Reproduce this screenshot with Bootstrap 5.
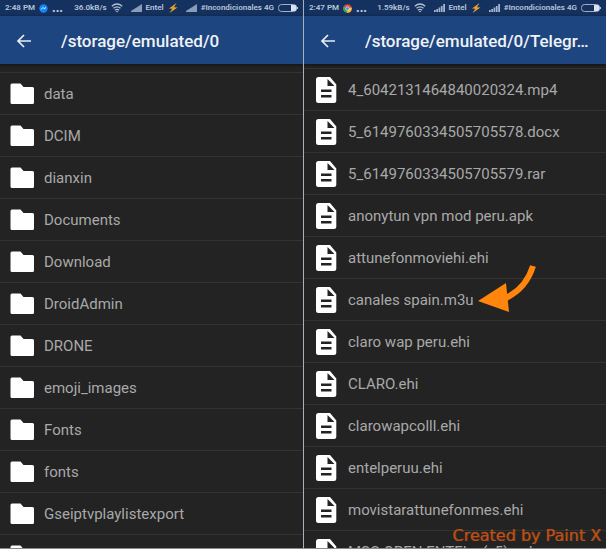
<!DOCTYPE html>
<html lang="es">
<head>
<meta charset="utf-8">
<meta name="viewport" content="width=device-width, initial-scale=1">
<title>File browser</title>
<link href="https://cdn.jsdelivr.net/npm/bootstrap@5.3.0/dist/css/bootstrap.min.css" rel="stylesheet">
<style>
body { font-family: Roboto, "Liberation Sans", sans-serif; background: #232323; }
.phone { min-width: 0; background: #232323; border-bottom: 1px solid #8a8a8a; }
.phone-right { border-left: 1px solid #a9b0b8; }
.status { height: 16px; background: #15315f; color: #b9c6d8; font-size: 8px; line-height: 16px; font-weight: 600; padding: 0 5px; white-space: nowrap; }
.status svg { flex: none; }
.dots { font-size: 12px; line-height: 12px; }
.appbar { height: 48px; background: #1d4580; padding: 2px 16px 0; gap: 29px; box-shadow: 0 1px 3px #111; }
.back { background: none; border: 0; line-height: 0; }
.path-title { color: #f0f2f5; font-size: 17px; line-height: 24px; font-weight: 500; }
.files { padding-top: 8px; }
.files-right { padding-top: 4px; }
.entry { height: 42px; border-top: 1px solid #333; padding: 0 10px; gap: 10px; color: #a9a9a9; font-size: 15px; line-height: 20px; text-decoration: none; white-space: nowrap; }
.entry svg { width: 24px; height: 28px; flex: none; }
.pointer { left: 174px; top: 265px; }
.credit { right: 5px; bottom: 2px; font-family: "DejaVu Sans", sans-serif; font-size: 16px; line-height: 20px; color: #c8481a; text-shadow: 1px 0 #80700088; }
</style>
<script src="https://cdn.jsdelivr.net/npm/bootstrap@5.3.0/dist/js/bootstrap.bundle.min.js"></script>
</head>
<body>
<svg class="d-none" aria-hidden="true">
<symbol id="folder" viewBox="0 0 24 28"><path fill="#fff" d="M2 3.500h8.500l3 3.500H22.500a1.500 1.500 0 0 1 1.500 1.500V22.500a1.500 1.500 0 0 1-1.500 1.500H2A1.500 1.500 0 0 1 .5 22.500V5A1.500 1.500 0 0 1 2 3.500z"/></symbol>
<symbol id="file" viewBox="0 0 24 28"><path fill="#fff" fill-rule="evenodd" d="M4.500 1H16L22.300 8.500V24.500a2.500 2.500 0 0 1-2.500 2.500H4.500A2.500 2.500 0 0 1 2 24.500V3.500A2.500 2.500 0 0 1 4.500 1zM13.500 3V10H20.500zM7 13.500V16H17.500V13.500zM7 19V21.500H17.500V19z"/></symbol>
<symbol id="wifi" viewBox="0 0 12 10"><g fill="none" stroke="#b4c1d4" stroke-width="1.300"><path d="M.8 3.300Q6-1.200 11.200 3.300M2.500 5.300Q6 2.300 9.500 5.300M4 7.200Q6 5.500 8 7.200"/></g><path fill="#b4c1d4" d="M4.800 8L6 9.500 7.200 8z"/></symbol>
<symbol id="signal" viewBox="0 0 11 8"><path fill="#899dba" d="M0 8V7L11 0V8z"/></symbol>
<symbol id="bars" viewBox="0 0 11 8"><path fill="#a5b5cb" d="M0 6h1.700v2H0zM2.300 5H4v3H2.300zM4.600 3.500h1.700V8H4.600zM6.900 2h1.700v6H6.900zM9.200 0H11v8H9.200z"/></symbol>
<symbol id="bolt" viewBox="0 0 10 10"><path fill="#e7a22b" d="M8.500 0L1 5.500 4.300 5.800 1.500 10 9.500 4.500 6 4.200z"/></symbol>
<symbol id="battery" viewBox="0 0 20 8"><rect x=".5" y=".5" width="18" height="7" rx="3" fill="none" stroke="#9fb0c8"/><path fill="#dbe3ed" d="M13 1h3.500a2 2 0 0 1 2 2v2a2 2 0 0 1-2 2H13z"/><path fill="#b4c1d4" d="M19 3h1v2h-1z"/></symbol>
<symbol id="arrow-back" viewBox="0 0 16 16"><path d="M8 2L2 8l6 6M2.500 8H15" fill="none" stroke="#e8edf4" stroke-width="1.700"/></symbol>
</svg>
<div class="d-flex vh-100 overflow-hidden">
<section class="phone phone-left d-flex flex-column w-50 overflow-hidden">
<div class="status d-flex align-items-center justify-content-between">
<div class="d-flex align-items-center gap-1"><span>2:48 PM</span><svg width="9" height="9" viewBox="0 0 9 9"><circle cx="4.500" cy="4.500" r="4.200" fill="#1685f5"/><path d="M2 5.500L4 3.500 5 4.700 7 3.500" fill="none" stroke="#d9efff"/></svg><b class="dots">...</b></div>
<div class="d-flex align-items-center gap-1"><span>36.0kB/s</span><svg width="12" height="10"><use href="#wifi"/></svg><svg class="ms-1" width="11" height="8"><use href="#signal"/></svg><span>Entel</span><svg width="10" height="10"><use href="#bolt"/></svg><svg class="ms-1" width="11" height="8"><use href="#signal"/></svg><span>#Incondicionales 4G</span><svg width="20" height="8"><use href="#battery"/></svg></div>
</div>
<header class="appbar d-flex align-items-center flex-shrink-0"><button class="back p-0" type="button" aria-label="Back"><svg width="16" height="16"><use href="#arrow-back"/></svg></button><h1 class="path-title m-0 text-truncate">/storage/emulated/0</h1></header>
<ul class="files list-unstyled m-0">
<li><a class="entry d-flex align-items-center" href="#"><svg><use href="#folder"/></svg>data</a></li>
<li><a class="entry d-flex align-items-center" href="#"><svg><use href="#folder"/></svg>DCIM</a></li>
<li><a class="entry d-flex align-items-center" href="#"><svg><use href="#folder"/></svg>dianxin</a></li>
<li><a class="entry d-flex align-items-center" href="#"><svg><use href="#folder"/></svg>Documents</a></li>
<li><a class="entry d-flex align-items-center" href="#"><svg><use href="#folder"/></svg>Download</a></li>
<li><a class="entry d-flex align-items-center" href="#"><svg><use href="#folder"/></svg>DroidAdmin</a></li>
<li><a class="entry d-flex align-items-center" href="#"><svg><use href="#folder"/></svg>DRONE</a></li>
<li><a class="entry d-flex align-items-center" href="#"><svg><use href="#folder"/></svg>emoji_images</a></li>
<li><a class="entry d-flex align-items-center" href="#"><svg><use href="#folder"/></svg>Fonts</a></li>
<li><a class="entry d-flex align-items-center" href="#"><svg><use href="#folder"/></svg>fonts</a></li>
<li><a class="entry d-flex align-items-center" href="#"><svg><use href="#folder"/></svg>Gseiptvplaylistexport</a></li>
<li><a class="entry d-flex align-items-center" href="#" aria-label="Folder"><svg><use href="#folder"/></svg></a></li>
</ul>
</section>
<section class="phone phone-right position-relative d-flex flex-column w-50 overflow-hidden">
<div class="status d-flex align-items-center justify-content-between">
<div class="d-flex align-items-center gap-1"><span>2:47 PM</span><svg width="9" height="9" viewBox="0 0 9 9"><circle cx="4.500" cy="4.500" r="4.300" fill="#e5493a"/><path d="M4.500 4.500L.8 2.300A4.300 4.300 0 0 0 4.200 8.800z" fill="#35a853"/><path d="M4.500 4.500L8.700 3.500A4.300 4.300 0 0 1 4.200 8.800z" fill="#f7c331"/><circle cx="4.500" cy="4.500" r="1.800" fill="#4285f4" stroke="#fff" stroke-width=".6"/></svg><b class="dots">...</b></div>
<div class="d-flex align-items-center gap-1"><span>1.59kB/s</span><svg width="12" height="10"><use href="#wifi"/></svg><svg class="ms-1" width="11" height="8"><use href="#bars"/></svg><span>Entel</span><svg width="10" height="10"><use href="#bolt"/></svg><svg class="ms-1" width="11" height="8"><use href="#bars"/></svg><span>#Incondicionales 4G</span><svg width="20" height="8"><use href="#battery"/></svg></div>
</div>
<header class="appbar d-flex align-items-center flex-shrink-0"><button class="back p-0" type="button" aria-label="Back"><svg width="16" height="16"><use href="#arrow-back"/></svg></button><h1 class="path-title m-0 text-truncate">/storage/emulated/0/Telegr...</h1></header>
<ul class="files files-right list-unstyled m-0">
<li><a class="entry d-flex align-items-center" href="#"><svg><use href="#file"/></svg>4_6042131464840020324.mp4</a></li>
<li><a class="entry d-flex align-items-center" href="#"><svg><use href="#file"/></svg>5_6149760334505705578.docx</a></li>
<li><a class="entry d-flex align-items-center" href="#"><svg><use href="#file"/></svg>5_6149760334505705579.rar</a></li>
<li><a class="entry d-flex align-items-center" href="#"><svg><use href="#file"/></svg>anonytun vpn mod peru.apk</a></li>
<li><a class="entry d-flex align-items-center" href="#"><svg><use href="#file"/></svg>attunefonmoviehi.ehi</a></li>
<li><a class="entry d-flex align-items-center" href="#"><svg><use href="#file"/></svg>canales spain.m3u</a></li>
<li><a class="entry d-flex align-items-center" href="#"><svg><use href="#file"/></svg>claro wap peru.ehi</a></li>
<li><a class="entry d-flex align-items-center" href="#"><svg><use href="#file"/></svg>CLARO.ehi</a></li>
<li><a class="entry d-flex align-items-center" href="#"><svg><use href="#file"/></svg>clarowapcolll.ehi</a></li>
<li><a class="entry d-flex align-items-center" href="#"><svg><use href="#file"/></svg>entelperuu.ehi</a></li>
<li><a class="entry d-flex align-items-center" href="#"><svg><use href="#file"/></svg>movistarattunefonmes.ehi</a></li>
<li><a class="entry d-flex align-items-center" href="#"><svg><use href="#file"/></svg>MSC OPEN ENTEL - (v5).apk</a></li>
</ul>
<svg class="pointer position-absolute" width="60" height="50" viewBox="0 0 60 50" aria-hidden="true"><path d="M55 1Q48 24 26 34" fill="none" stroke="#ff850c" stroke-width="6"/><path fill="#ff850c" d="M0 36L28 18 31 47z"/></svg>
<div class="credit position-absolute">Created by Paint X</div>
</section>
</div>
</body>
</html>
